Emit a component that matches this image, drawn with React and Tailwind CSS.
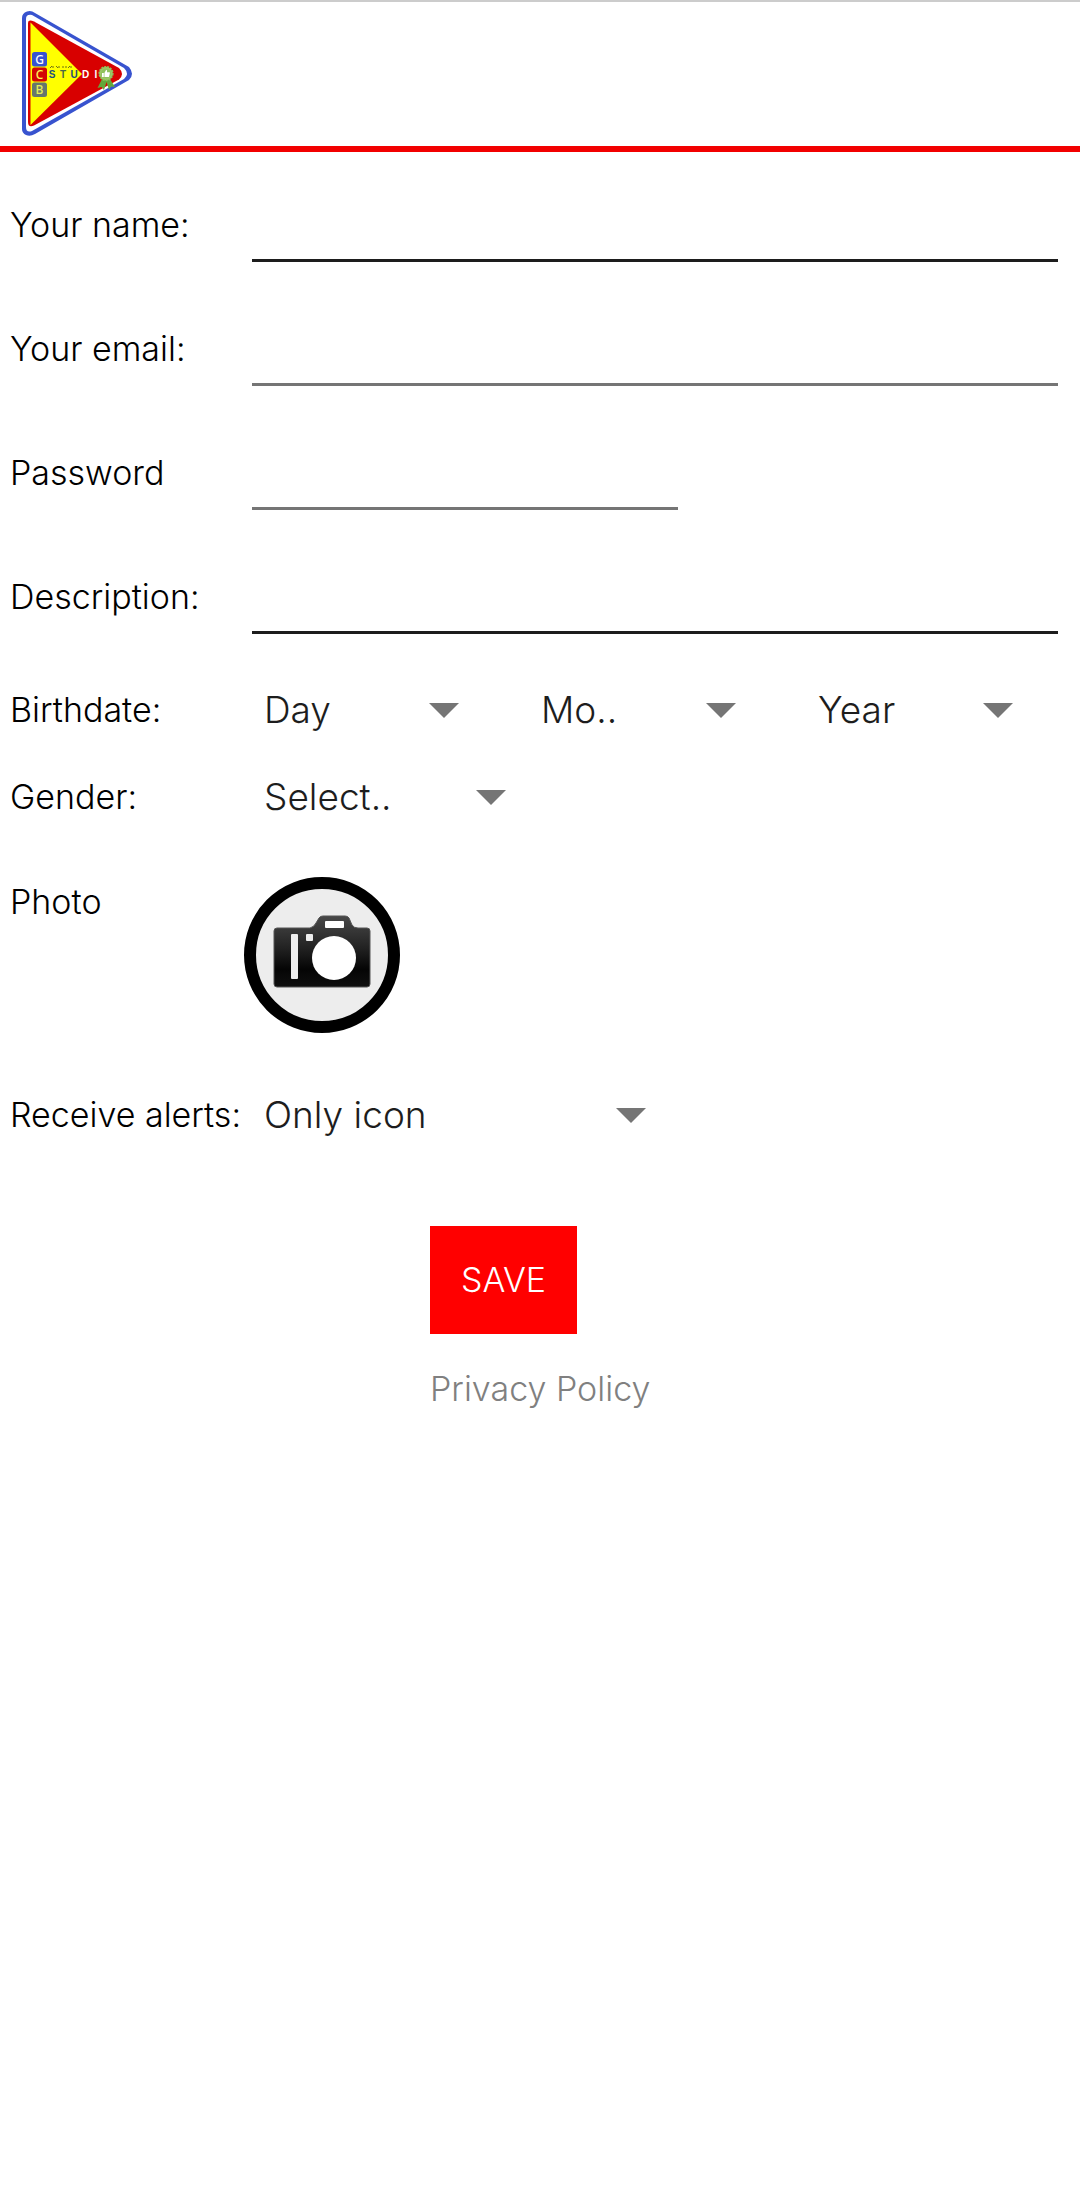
import React from "react";

function Logo() {
  return (
    <svg viewBox="0 0 112 128" className="h-[128px] w-[112px]" role="img" aria-label="GCB Studio">
      <path d="M5 0.5 Q9 -1 13 2 L107 56 Q113 63 107 69 L13 123 Q8 126 4 124 Q0 122 0 118 L0 7 Q0 2 5 0.5Z" fill="#3853cf" />
      <path d="M4 8 Q4 3 10 4 L102 57 Q108 63 102 68 L10 120 Q4 122 4 116Z" fill="#ffffff" />
      <path d="M6 12 Q6 8 12 10.500 L97 57 Q103 63 97 68.500 L12 114.500 Q6 117 6 111Z" fill="#d80000" />
      <path d="M8.500 11.500 L60 63 L8.500 114Z" fill="#ffff00" />
      <rect x="10" y="41" width="15" height="14.500" rx="2.500" fill="#3853cf" />
      <rect x="10" y="56.500" width="15" height="14" rx="2.500" fill="#d30505" />
      <rect x="10" y="71.500" width="15" height="14.500" rx="2.500" fill="#66766c" />
      <g fontFamily="'Noto Sans', sans-serif" fontSize="12" fontWeight="500" textAnchor="middle">
        <text x="17.500" y="52.500" fill="#ffffff">G</text>
        <text x="17.500" y="67.500" fill="#fff35a">C</text>
        <text x="17.500" y="83" fill="#e4ee58">B</text>
      </g>
      <g fontFamily="'Liberation Sans', sans-serif" fontSize="10" fontWeight="700" textAnchor="middle">
        <text x="30" y="67" fill="#1f4f80">S</text>
        <text x="41" y="67" fill="#4a6a48">T</text>
        <text x="52" y="67" fill="#234a78">U</text>
        <text x="63.500" y="67" fill="#ffffff">D</text>
        <text x="74" y="67" fill="#ffffff">I</text>
      </g>
      <path d="M28 57 l2 -2 M31 55 v2 M34 55 l2 2 M37 55 v2 M41 57 v-2 M44 55 v2 M46 57 l2 -2 M49 55 v2" stroke="#6d6b16" strokeWidth="1" fill="none" />
      <path d="M80 68 L75.500 77 L79.500 76 L82 79 L84.500 71 L87 79 L89 75.500 L93 76 L88 68Z" fill="#62a83a" />
      <circle cx="84" cy="62.500" r="6.800" fill="#9fc767" stroke="#8cc05a" strokeWidth="1.600" strokeDasharray="2 1" />
      <circle cx="84" cy="62.500" r="5" fill="#8fc15c" />
      <path d="M80 62 h1.800 v4 h-1.800Z M82.400 62 l1.800 -3.300 q1.400 0 .8 2.600 h2.500 q.7 .5 .3 1.300 l-.8 3.400 h-4.600Z" fill="#ffffff" />
    </svg>
  );
}

function CameraIcon() {
  return (
    <svg viewBox="0 0 156 156" className="size-[156px]" aria-hidden="true">
      <defs>
        <linearGradient id="camera-body" x1="0" y1="0" x2="0" y2="1">
          <stop offset="0" stopColor="#484848" />
          <stop offset="0.45" stopColor="#222222" />
          <stop offset="0.75" stopColor="#050505" />
          <stop offset="1" stopColor="#101010" />
        </linearGradient>
      </defs>
      <circle cx="78" cy="78" r="72" fill="#ededed" stroke="#000000" strokeWidth="12" />
      <path
        d="M33 51 H66 Q70 50 72 46 L75 41 Q76 39 79 39 H101 Q104 39 105 41 L108 48 Q110 51 114 51 H123 Q126 51 126 54 V107 Q126 110 123 110 H33 Q30 110 30 107 V54 Q30 51 33 51Z"
        fill="url(#camera-body)"
        stroke="#555555"
        strokeWidth="1"
      />
      <rect x="47" y="57" width="7" height="45" rx="1" fill="#ededed" />
      <rect x="62" y="57" width="7" height="7" rx="1" fill="#ededed" />
      <rect x="81" y="44" width="19" height="7" rx="1" fill="#ffffff" />
      <circle cx="90" cy="81" r="22" fill="#ffffff" />
    </svg>
  );
}

const labelClass = "block whitespace-nowrap pl-[10px] text-[34px] leading-[44px] text-black";
const rowClass = "grid grid-cols-[244px_1fr]";

function TextRow({ id, label, type = "text", inputClass }) {
  return (
    <div className={rowClass}>
      <label htmlFor={id} className={labelClass}>{label}</label>
      <div className="pl-2 pr-[22px]">
        <input
          id={id}
          type={type}
          className={"block h-[59px] border-b-[3px] bg-transparent px-1 text-[34px] outline-none " + inputClass}
        />
      </div>
    </div>
  );
}

function Dropdown({ id, label, options, className }) {
  return (
    <div className={"relative " + className}>
      <select
        id={id}
        aria-label={label}
        className="block h-[60px] w-full appearance-none bg-transparent pl-5 pr-[46px] text-[37px] leading-[60px] text-[#1d1d1d] outline-none"
      >
        {options.map((o) => (
          <option key={o}>{o}</option>
        ))}
      </select>
      <svg viewBox="0 0 30 15" className="pointer-events-none absolute right-[17px] top-[23px] h-[15px] w-[30px]" aria-hidden="true">
        <path d="M0 0 H30 L15 15Z" fill="#757575" />
      </svg>
    </div>
  );
}

export default function App() {
  return (
    <div className="min-h-screen bg-white font-['Inter',sans-serif] font-light">
      <header className="border-b-[6px] border-t-2 border-b-[#f20000] border-t-[#cccccc] pb-[7px] pl-[22px] pt-[9px]">
        <Logo />
      </header>

      <form className="pt-[51px]" onSubmit={(e) => e.preventDefault()}>
        <div className="flex flex-col gap-[65px]">
          <TextRow id="name" label="Your name:" inputClass="w-full border-[#1d1d1d]" />
          <TextRow id="email" label="Your email:" type="email" inputClass="w-full border-[#757575]" />
          <TextRow id="password" label="Password" type="password" inputClass="w-[426px] border-[#757575]" />
          <TextRow id="description" label="Description:" inputClass="w-full border-[#1d1d1d]" />
        </div>

        <div className={rowClass + " mt-[46px] items-center"}>
          <label htmlFor="day" className={labelClass}>Birthdate:</label>
          <div className="flex gap-[45px] pr-[50px]">
            <Dropdown id="day" label="Day" options={["Day"]} className="flex-1" />
            <Dropdown id="month" label="Month" options={["Mo.."]} className="flex-1" />
            <Dropdown id="year" label="Year" options={["Year"]} className="flex-1" />
          </div>
        </div>

        <div className={rowClass + " mt-[27px] items-center"}>
          <label htmlFor="gender" className={labelClass}>Gender:</label>
          <Dropdown id="gender" label="Gender" options={["Select.."]} className="w-[279px]" />
        </div>

        <div className={rowClass + " mt-[50px] items-start"}>
          <label htmlFor="photo" className={labelClass + " pt-[3px]"}>Photo</label>
          <button id="photo" type="button" className="w-fit rounded-full">
            <CameraIcon />
          </button>
        </div>

        <div className={rowClass + " mt-[52px] items-center"}>
          <label htmlFor="alerts" className={labelClass}>Receive alerts:</label>
          <Dropdown id="alerts" label="Receive alerts" options={["Only icon"]} className="w-[419px]" />
        </div>

        <div className="mt-[81px] flex flex-col items-start gap-[33px] pl-[430px]">
          <button type="submit" className="h-[108px] w-[147px] bg-[#ff0000] text-[34px] leading-[44px] text-white">
            SAVE
          </button>
          <a href="#privacy" className="text-[34px] leading-[44px] text-[#808080]">Privacy Policy</a>
        </div>
      </form>
    </div>
  );
}
